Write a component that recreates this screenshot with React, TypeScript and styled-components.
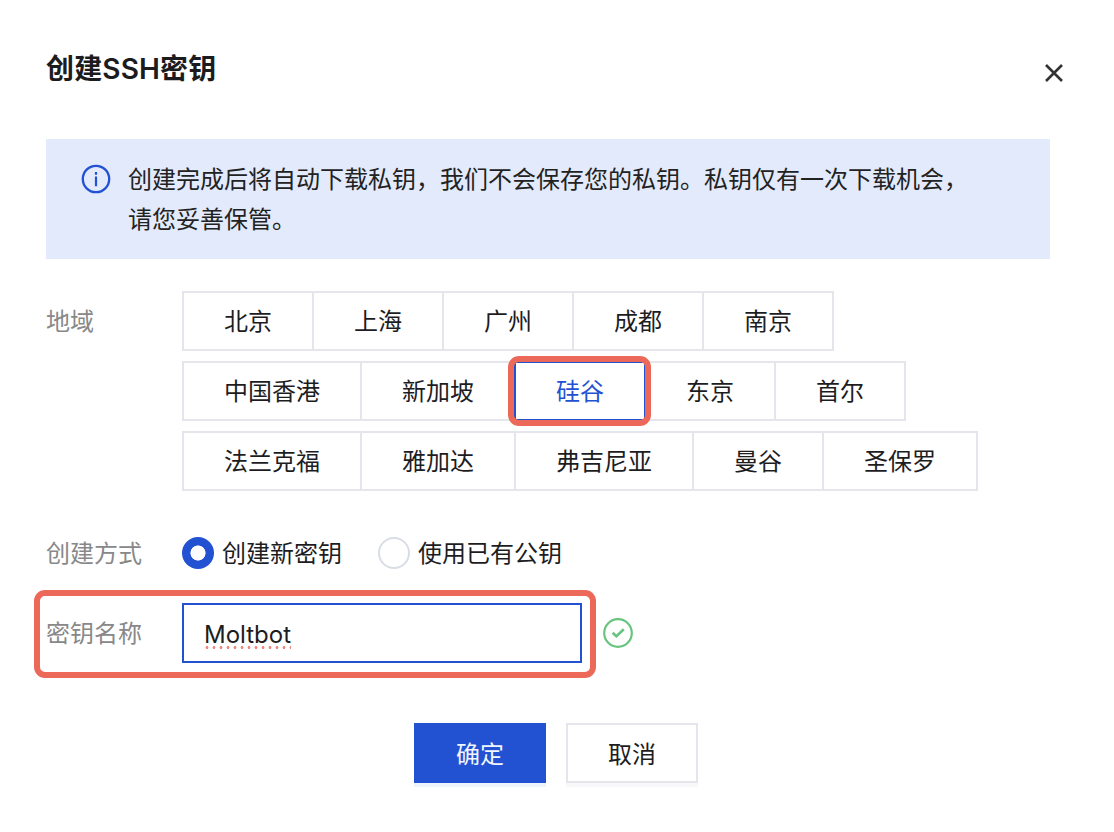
import React from "react";
import styled, { createGlobalStyle } from "styled-components";

const Global = createGlobalStyle`
  html, body { margin: 0; padding: 0; background: #fff; }
  * { box-sizing: border-box; }
  body { font-family: Inter, "Noto Sans CJK SC", "Liberation Sans", sans-serif; color: #1d1d1f; }
`;

const Dialog = styled.div`
  width: 1114px;
  height: 832px;
  padding: 46px 64px 0 46px;
  background: #fff;
  display: flex;
  flex-direction: column;
`;
const Header = styled.div`
  height: 93px;
  display: flex;
  justify-content: space-between;
  align-items: flex-start;
`;
const Title = styled.h1`
  margin: 0;
  font-size: 28px;
  line-height: 46px;
  font-weight: 600;
  letter-spacing: 0.15px;
  color: #1c1c1e;
`;
const Close = styled.button`
  border: 0;
  background: none;
  padding: 0;
  width: 20px;
  height: 20px;
  margin: 17px -14px 0 0;
  display: block;
  color: #333;
`;
const Alert = styled.div`
  height: 120px;
  background: #e3eafb;
  padding: 21px 60px 0 35px;
  display: flex;
  gap: 17px;
`;
const AlertIcon = styled.svg`
  flex: none;
  width: 30px;
  height: 30px;
  margin-top: 4px;
`;
const AlertText = styled.p`
  margin: 0;
  font-size: 24px;
  line-height: 40px;
  color: #222;
`;
const Row = styled.div<{ $top: number; $h: number }>`
  display: flex;
  margin-top: ${(p) => p.$top}px;
  min-height: ${(p) => p.$h}px;
`;
const Label = styled.div<{ $lh: number }>`
  width: 136px;
  flex: none;
  align-self: flex-start;
  font-size: 24px;
  line-height: ${(p) => p.$lh}px;
  color: #888;
`;
const Regions = styled.div`
  display: flex;
  flex-direction: column;
  gap: 10px;
`;
const RegionLine = styled.div`
  display: flex;
`;
const RegionBtn = styled.div<{ $active?: boolean }>`
  position: relative;
  height: 60px;
  padding: 0 40px;
  margin-right: -2px;
  border: 2px solid ${(p) => (p.$active ? "#2251d1" : "#e5e6eb")};
  background: #fff;
  font-size: 24px;
  line-height: 58px;
  color: ${(p) => (p.$active ? "#2251d1" : "#1d1d1f")};
  z-index: ${(p) => (p.$active ? 1 : 0)};
`;
const Mark = styled.span`
  position: absolute;
  border: 6px solid #ec695a;
  border-radius: 11px;
  pointer-events: none;
`;
const RegionMark = styled(Mark)`
  inset: -7px -7px -7px -8px;
`;
const FieldMark = styled(Mark)`
  left: -12px;
  top: -13px;
  width: 562px;
  height: 88px;
`;
const Radios = styled.div`
  display: flex;
  align-items: center;
  height: 40px;
  gap: 36px;
`;
const RadioItem = styled.label`
  display: flex;
  align-items: center;
  gap: 8px;
  font-size: 24px;
  line-height: 40px;
`;
const RadioDot = styled.span<{ $on?: boolean }>`
  width: 32px;
  height: 32px;
  margin-top: -2px;
  border-radius: 50%;
  background: ${(p) => (p.$on ? "radial-gradient(circle, #fff 7.2px, #2251d1 7.9px)" : "#fff")};
  border: ${(p) => (p.$on ? "0" : "2px solid #d9dde6")};
`;
const NameRow = styled.div`
  position: relative;
  display: flex;
  align-items: center;
  margin-top: 29px;
  height: 60px;
`;
const Field = styled.div`
  width: 400px;
  height: 60px;
  border: 2px solid #2251d1;
  padding: 0 20px;
  font-size: 24px;
  line-height: 60px;
  color: #1d1d1f;
`;
const Spell = styled.span`
  background: radial-gradient(circle at 3px 1.5px, #f08a80 1.2px, transparent 1.7px) left bottom / 7px 3px repeat-x;
`;
const Ok = styled.svg`
  width: 32px;
  height: 32px;
  margin-left: 20px;
`;
const Actions = styled.div`
  display: flex;
  gap: 20px;
  margin-top: 60px;
  padding-left: 368px;
`;
const Btn = styled.button<{ $primary?: boolean }>`
  width: 132px;
  height: 60px;
  padding: 0 0 2px;
  font-family: inherit;
  font-size: 24px;
  border: ${(p) => (p.$primary ? "0" : "2px solid #e5e6eb")};
  background: ${(p) => (p.$primary ? "#2251d1" : "#fff")};
  color: ${(p) => (p.$primary ? "#f2f5fd" : "#1d1d1f")};
  box-shadow: 0 4px 0 ${(p) => (p.$primary ? "#eff3fc" : "#f8f8fa")};
`;

const regions = [
  ["北京", "上海", "广州", "成都", "南京"],
  ["中国香港", "新加坡", "硅谷", "东京", "首尔"],
  ["法兰克福", "雅加达", "弗吉尼亚", "曼谷", "圣保罗"],
];

export default function App() {
  return (
    <Dialog>
      <Global />
      <Header>
        <Title>创建SSH密钥</Title>
        <Close aria-label="关闭">
          <svg width="20" height="20" viewBox="0 0 20 20" fill="none" stroke="currentColor" strokeWidth="2.6">
            <path d="M2 2 18 18M18 2 2 18" />
          </svg>
        </Close>
      </Header>
      <Alert>
        <AlertIcon viewBox="0 0 30 30" fill="none" stroke="#2251d1" strokeWidth="2.3">
          <circle cx="15" cy="15" r="13.2" />
          <path d="M15 12.6v9.6M15 8v2.8" strokeWidth="2.2" />
        </AlertIcon>
        <AlertText>
          创建完成后将自动下载私钥，我们不会保存您的私钥。私钥仅有一次下载机会，
          <br />
          请您妥善保管。
        </AlertText>
      </Alert>
      <Row $top={32} $h={200}>
        <Label $lh={62}>地域</Label>
        <Regions>
          {regions.map((line, i) => (
            <RegionLine key={i}>
              {line.map((r) => (
                <RegionBtn key={r} $active={r === "硅谷"}>
                  {r}
                  {r === "硅谷" && <RegionMark />}
                </RegionBtn>
              ))}
            </RegionLine>
          ))}
        </Regions>
      </Row>
      <Row $top={43} $h={40}>
        <Label $lh={40}>创建方式</Label>
        <Radios>
          <RadioItem>
            <RadioDot $on />
            创建新密钥
          </RadioItem>
          <RadioItem>
            <RadioDot />
            使用已有公钥
          </RadioItem>
        </Radios>
      </Row>
      <NameRow>
        <FieldMark />
        <Label $lh={62}>密钥名称</Label>
        <Field>
          <Spell>Moltbot</Spell>
        </Field>
        <Ok viewBox="0 0 32 32" fill="none" stroke="#68c47e" strokeWidth="2.2">
          <circle cx="16" cy="16" r="13.8" />
          <path d="M10.6 15.8l3.8 3.4 7.4-7" strokeWidth="2.6" />
        </Ok>
      </NameRow>
      <Actions>
        <Btn $primary>确定</Btn>
        <Btn>取消</Btn>
      </Actions>
    </Dialog>
  );
}
